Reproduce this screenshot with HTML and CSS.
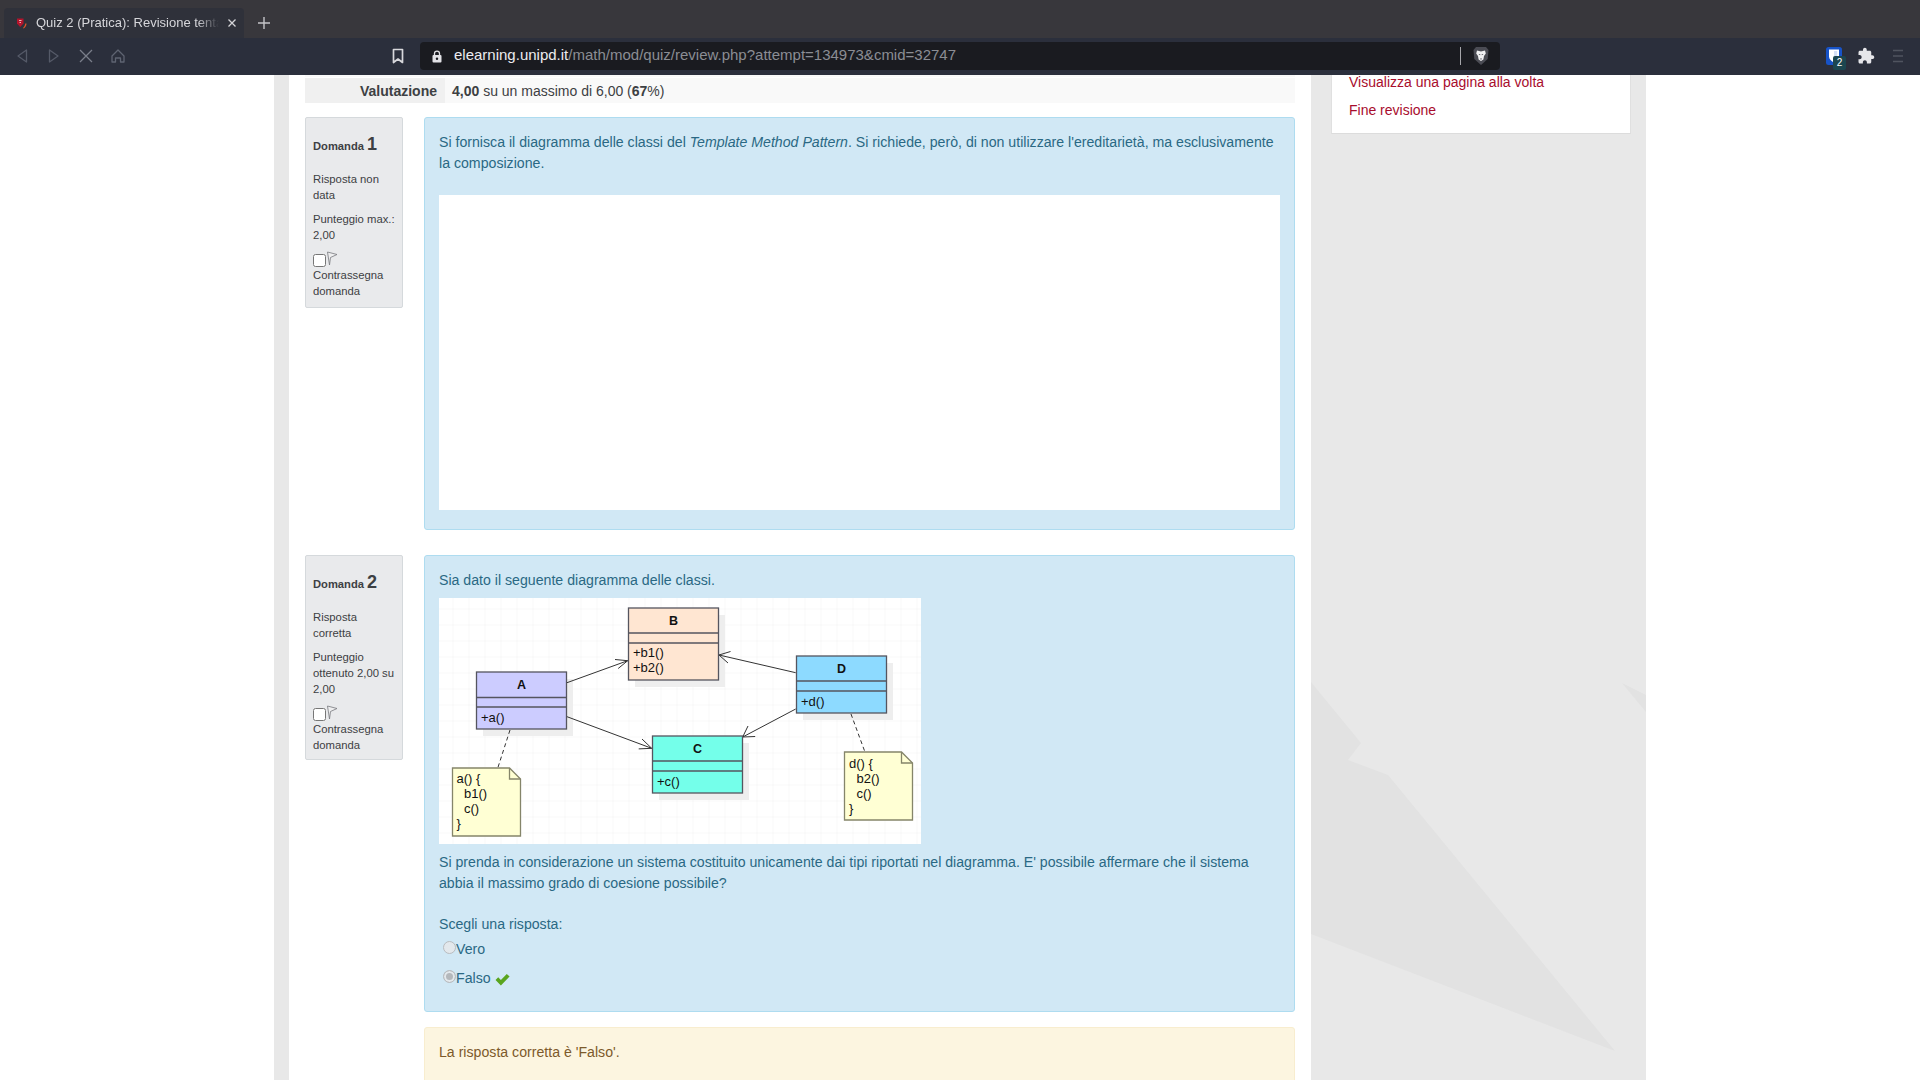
FILE: index.html
```html
<!DOCTYPE html>
<html lang="it">
<head>
    <meta charset="UTF-8">
    <meta name="viewport" content="width=device-width, initial-scale=1.0">
    <title>Quiz 2 (Pratica): Revisione tentativo</title>
    <link rel="stylesheet" href="styles.css">
</head>
<body>
    <!-- Browser tabs -->
    <div class="tabstrip">
        <div class="tab">
            <svg class="favicon" viewBox="0 0 12 12" width="12" height="12">
                <path d="M1 1.500h6.500v5L4.200 10 1 6.500z" fill="#b3142c"/>
                <path d="M3 3.500h2.500M3.500 5.500h1.500" stroke="#e9b9b9" stroke-width="1"/>
                <path d="M10.500 6.500c0 2-1 3.600-2.800 5l-.7-.5c1.300-1.300 2-2.600 2.300-4.500z" fill="#e2562a"/>
            </svg>
            <span class="tab-title">Quiz 2 (Pratica): Revisione tentativo</span>
            <svg class="tab-close" viewBox="0 0 10 10" width="10" height="10">
                <path d="M1.500 1.500l7 7M8.500 1.500l-7 7" stroke="#d4d4d8" stroke-width="1.300"/>
            </svg>
        </div>
        <svg class="tab-new" viewBox="0 0 14 14" width="14" height="14">
            <path d="M7 1v12M1 7h12" stroke="#c4c4c8" stroke-width="1.400"/>
        </svg>
    </div>

    <!-- Browser toolbar -->
    <div class="toolbar">
        <div class="toolbar-left">
            <span class="tool">
                <svg viewBox="0 0 14 16" width="14" height="16"><path d="M11.500 2 3 8l8.500 6z" fill="none" stroke="#555a68" stroke-width="1.300" stroke-linejoin="round"/></svg>
            </span>
            <span class="tool">
                <svg viewBox="0 0 14 16" width="14" height="16"><path d="M2.500 2 11 8l-8.500 6z" fill="none" stroke="#555a68" stroke-width="1.300" stroke-linejoin="round"/></svg>
            </span>
            <span class="tool">
                <svg viewBox="0 0 14 14" width="14" height="14"><path d="M1 1l12 12M13 1 1 13" stroke="#7a7e8a" stroke-width="1.300"/></svg>
            </span>
            <span class="tool">
                <svg viewBox="0 0 16 16" width="16" height="16"><path d="M2 8l6-6 6 6v6h-3.500v-4h-5v4H2z" fill="none" stroke="#5f6472" stroke-width="1.300" stroke-linejoin="round"/></svg>
            </span>
            <svg class="bookmark" viewBox="0 0 12 16" width="12" height="16">
                <path d="M1.500 1.500h9v13L6 11l-4.500 3.500z" fill="none" stroke="#d8d8dc" stroke-width="1.700" stroke-linejoin="round"/>
            </svg>
        </div>
        <div class="urlbar">
            <svg class="lock" viewBox="0 0 10 13" width="10" height="13">
                <path d="M2.500 5.500V3.600a2.500 2.500 0 0 1 5 0v1.900" fill="none" stroke="#e2e2e6" stroke-width="1.300"/>
                <rect x="0.500" y="5" width="9" height="7.500" rx="1" fill="#e2e2e6"/>
                <circle cx="5" cy="8.700" r="1.200" fill="#1a1b20"/>
            </svg>
            <span class="url"><span class="url-host">elearning.unipd.it</span>/math/mod/quiz/review.php?attempt=134973&amp;cmid=32747</span>
            <span class="url-sep"></span>
            <svg class="lion" viewBox="0 0 16 20" width="16" height="20">
                <path d="M3 1h10l2.500 3-.8 9L8 19l-6.700-6-.8-9z" fill="#4b4c54"/>
                <path d="M4 4.500 8 5.500l4-1 .8 3-1.800 2.500-.6 3.500L8 15l-2.400-1.500L5 10 3.200 7.500z" fill="#f1f1f3"/>
                <path d="M5.500 8h1.700v1.200zM10.500 8H8.800v1.200zM7 12.500h2L8 14z" fill="#4b4c54"/>
            </svg>
        </div>
        <div class="toolbar-right">
            <span class="tool bitwarden">
                <svg viewBox="0 0 16 18" width="16" height="18">
                    <rect width="16" height="18" rx="2.500" fill="#1753c8"/>
                    <path d="M3 2.500h10v7c0 2.800-2.500 4.800-5 6-2.500-1.200-5-3.200-5-6z" fill="#fff"/>
                    <path d="M8 4v9.500c1.800-1 3.200-2.400 3.200-4.300V4z" fill="#1753c8" opacity="0.180"/>
                </svg>
                <span class="badge">2</span>
            </span>
            <span class="tool">
                <svg viewBox="0 0 24 24" width="18" height="18"><path d="M20.500 11H19V7c0-1.100-.9-2-2-2h-4V3.500C13 2.120 11.880 1 10.500 1S8 2.120 8 3.500V5H4c-1.100 0-1.990.9-1.990 2v3.800H3.500c1.490 0 2.700 1.210 2.700 2.700s-1.210 2.700-2.700 2.700H2V20c0 1.100.9 2 2 2h3.800v-1.500c0-1.490 1.210-2.700 2.700-2.700 1.490 0 2.700 1.210 2.700 2.700V22H17c1.100 0 2-.9 2-2v-4h1.500c1.380 0 2.500-1.120 2.500-2.500S21.880 11 20.500 11z" fill="#e6e6ea"/></svg>
            </span>
            <span class="tool">
                <svg viewBox="0 0 12 14" width="12" height="14"><path d="M1 1.500h10M1 7h10M1 12.500h10" stroke="#50545f" stroke-width="1.600"/></svg>
            </span>
        </div>
    </div>

    <!-- Page -->
    <div class="viewport">
        <div class="page">
            <main class="main">
                <div class="summary-prev"></div>
                <div class="summary">
                    <div class="summary-label">Valutazione</div>
                    <div class="summary-value"><b>4,00</b> su un massimo di 6,00 (<b>67</b>%)</div>
                </div>

                <!-- Domanda 1 -->
                <section class="question first">
                    <div class="qinfo">
                        <h3>Domanda <span>1</span></h3>
                        <p>Risposta non data</p>
                        <p>Punteggio max.: 2,00</p>
                        <div class="qflag">
                            <input type="checkbox">
                            <svg viewBox="0 0 12 15" width="12" height="15"><path d="M1.500 1 11 3.500 4.500 6.500 3.500 14z" fill="#eeeeef" stroke="#77797d" stroke-width="0.800" stroke-linejoin="round"/></svg>
                        </div>
                        <p class="qflag-label">Contrassegna domanda</p>
                    </div>
                    <div class="qbody">
                        <p>Si fornisca il diagramma delle classi del <i>Template Method Pattern</i>. Si richiede, però, di non utilizzare l'ereditarietà, ma esclusivamente la composizione.</p>
                        <div class="answer-blank"></div>
                    </div>
                </section>

                <!-- Domanda 2 -->
                <section class="question">
                    <div class="qinfo">
                        <h3>Domanda <span>2</span></h3>
                        <p>Risposta corretta</p>
                        <p>Punteggio ottenuto 2,00 su 2,00</p>
                        <div class="qflag">
                            <input type="checkbox">
                            <svg viewBox="0 0 12 15" width="12" height="15"><path d="M1.500 1 11 3.500 4.500 6.500 3.500 14z" fill="#eeeeef" stroke="#77797d" stroke-width="0.800" stroke-linejoin="round"/></svg>
                        </div>
                        <p class="qflag-label">Contrassegna domanda</p>
                    </div>
                    <div class="qcolumn">
                        <div class="qbody second">
                            <p>Sia dato il seguente diagramma delle classi.</p>
                            <svg class="uml" viewBox="0 0 482 246" width="482" height="246">
                                <defs>
                                    <pattern id="grid" x="13.500" y="10.500" width="16" height="16" patternUnits="userSpaceOnUse">
                                        <path d="M0 16V0h16" fill="none" stroke="#f1f1f1" stroke-width="1"/>
                                    </pattern>
                                </defs>
                                <rect width="482" height="246" fill="#fff"/>
                                <rect width="482" height="246" fill="url(#grid)"/>

                                <!-- shadows -->
                                <g fill="#eeeeee">
                                    <rect x="44" y="81" width="90" height="57"/>
                                    <rect x="196" y="17" width="90" height="72"/>
                                    <rect x="220" y="145" width="90" height="57"/>
                                    <rect x="364" y="65" width="90" height="57"/>
                                </g>

                                <!-- links -->
                                <g fill="none" stroke="#333" stroke-width="1">
                                    <path d="M128 84.700 188.700 62.700M176 61.500l12.700 1.200-9.500 7.800"/>
                                    <path d="M128 118.700 212.700 150.300M203 141l9.700 9.300-13 .6"/>
                                    <path d="M356.700 74.700 280 57M291.500 53.500 280 57l9 8"/>
                                    <path d="M356.700 111 303.700 139M309 128l-5.300 11 12.500-.5"/>
                                    <path d="M71 132 59 169.300M412 116l13.700 37.300" stroke-dasharray="4 3"/>
                                </g>

                                <!-- classes -->
                                <g stroke="#55555f" stroke-width="1.300">
                                    <rect x="37.500" y="74" width="90" height="57" fill="#ccccff"/>
                                    <path d="M37.500 99.500h90M37.500 109h90"/>
                                    <rect x="189.500" y="10" width="90" height="72" fill="#ffe6d2"/>
                                    <path d="M189.500 35h90M189.500 45h90"/>
                                    <rect x="213.500" y="138" width="90" height="57" fill="#74ffea"/>
                                    <path d="M213.500 163h90M213.500 173h90"/>
                                    <rect x="357.500" y="58" width="90" height="57" fill="#8ddaff"/>
                                    <path d="M357.500 83h90M357.500 93h90"/>
                                </g>

                                <!-- notes -->
                                <g fill="#ffffd4" stroke="#85856a" stroke-width="1.300">
                                    <path d="M13.500 170h57l11 11v57h-68z"/>
                                    <path d="M70.500 170v11h11" fill="none"/>
                                    <path d="M405.500 154h57l11 11v57h-68z"/>
                                    <path d="M462.500 154v11h11" fill="none"/>
                                </g>

                                <g class="uml-name">
                                    <text x="82.500" y="91">A</text>
                                    <text x="234.500" y="26.500">B</text>
                                    <text x="258.500" y="154.500">C</text>
                                    <text x="402.500" y="74.500">D</text>
                                </g>
                                <g class="uml-text">
                                    <text x="42" y="123.500">+a()</text>
                                    <text x="194" y="59">+b1()</text>
                                    <text x="194" y="74">+b2()</text>
                                    <text x="218" y="187.500">+c()</text>
                                    <text x="362" y="107.500">+d()</text>
                                    <text x="17.500" y="185">a() {</text>
                                    <text x="25" y="200">b1()</text>
                                    <text x="25" y="215">c()</text>
                                    <text x="17.500" y="230">}</text>
                                    <text x="410" y="169.500">d() {</text>
                                    <text x="417.500" y="184.500">b2()</text>
                                    <text x="417.500" y="199.500">c()</text>
                                    <text x="410" y="214.500">}</text>
                                </g>
                            </svg>
                            <p class="qtext">Si prenda in considerazione un sistema costituito unicamente dai tipi riportati nel diagramma. E' possibile affermare che il sistema abbia il massimo grado di coesione possibile?</p>
                            <p class="prompt">Scegli una risposta:</p>
                            <label class="option"><input type="radio" disabled>Vero</label>
                            <label class="option checked">
                                <input type="radio" disabled checked>Falso
                                <svg class="tick" viewBox="0 0 14 12" width="15" height="13"><path d="M0.500 6.500 3 4l2.500 2.500L11 .8 13.600 3.300 5.500 11.500z" fill="#5aa51e"/></svg>
                            </label>
                        </div>
                        <div class="feedback">La risposta corretta è 'Falso'.</div>
                    </div>
                </section>
            </main>

            <aside class="side">
                <div class="side-block">
                    <a href="#">Visualizza una pagina alla volta</a>
                    <a href="#">Fine revisione</a>
                </div>
            </aside>

            <!-- Background watermark -->
            <svg class="watermark" viewBox="0 0 335 1005" width="335" height="1005">
                <path d="M0 607 50 668 37 685 77 700 304 976 0 859z" fill="#e2e2e2"/>
                <path d="M311 608 335 620V637z" fill="#e2e2e2"/>
            </svg>
        </div>
    </div>
</body>
</html>
```

FILE: styles.css
```css
/* General Page Styling */
html, body {
    height: 100%;
}

body {
    margin: 0;
    display: flex;
    flex-direction: column;
    height: 100vh;
    overflow: hidden;
    background-color: #fff;
    font-family: "Liberation Sans", Arial, sans-serif;
    font-size: 14.150px;
    line-height: 21px;
    color: #3d4043;
}

p {
    margin: 0;
}

/* Browser tabs */
.tabstrip {
    display: flex;
    align-items: flex-end;
    height: 38px;
    padding-left: 4px;
    background-color: #38373c;
    flex-shrink: 0;
}

.tab {
    display: flex;
    align-items: center;
    width: 240px;
    height: 30px;
    box-sizing: border-box;
    padding: 0 7px 0 12px;
    background-color: #2f313a;
    border-radius: 4px 4px 0 0;
}

.favicon {
    flex-shrink: 0;
}

.tab-title {
    flex: 1;
    margin-left: 8px;
    padding-bottom: 1px;
    overflow: hidden;
    white-space: nowrap;
    font-size: 13px;
    line-height: 18px;
    color: #d6d6da;
    -webkit-mask-image: linear-gradient(to right, #000 88%, transparent 100%);
    mask-image: linear-gradient(to right, #000 88%, transparent 100%);
}

.tab-close {
    flex-shrink: 0;
    margin-left: 8px;
}

.tab-new {
    margin: 0 0 8px 13px;
}

/* Browser toolbar */
.toolbar {
    display: grid;
    grid-template-columns: 1fr 1080px 1fr;
    align-items: center;
    height: 37px;
    box-sizing: border-box;
    padding: 0 6px 1px;
    background-color: #2b2f3c;
    flex-shrink: 0;
}

.toolbar-left,
.toolbar-right {
    display: flex;
    align-items: center;
}

.toolbar-right {
    justify-content: flex-end;
}

.tool {
    display: flex;
    justify-content: center;
    align-items: center;
    width: 32px;
    height: 28px;
    position: relative;
}

.bookmark {
    margin-left: auto;
    margin-right: 16px;
}

.urlbar {
    display: flex;
    align-items: center;
    height: 28px;
    padding: 0 11px 0 12px;
    background-color: #1a1b20;
    border-radius: 4px;
}

.lock {
    flex-shrink: 0;
    margin-right: 12px;
}

.url {
    flex: 1;
    padding-bottom: 2px;
    font-size: 15px;
    line-height: 18px;
    color: #8b8d94;
    white-space: nowrap;
}

.url-host {
    color: #ececef;
}

.url-sep {
    width: 1px;
    height: 18px;
    margin-right: 12px;
    background-color: #a6a6aa;
}

.badge {
    position: absolute;
    left: 15px;
    top: 14px;
    width: 13px;
    height: 14px;
    border-radius: 2px;
    background-color: #1c4650;
    color: #fff;
    font-size: 10px;
    line-height: 14px;
    text-align: center;
}

/* Page columns */
.viewport {
    flex: 1;
    overflow: hidden;
}

.page {
    display: flex;
    position: relative;
    width: 1372px;
    height: 1005px;
    margin-left: 274px;
    box-sizing: border-box;
    padding-left: 15px;
    background-color: #e8e8e8;
}

.main {
    width: 1022px;
    height: 1100px;
    box-sizing: border-box;
    padding: 0 16px;
    background-color: #fff;
    flex-shrink: 0;
}

.side {
    flex: 1;
    padding: 0 15px 0 20px;
}

.side-block {
    display: flex;
    flex-direction: column;
    gap: 7px;
    position: relative;
    z-index: 1;
    height: 61px;
    margin-top: -3px;
    background-color: #fff;
    border-bottom: 1px solid #dcdcdc;
    border-right: 1px solid #e0e0e0;
    border-left: 1px solid #e0e0e0;
    padding-left: 17px;
    font-size: 14px;
}

.side-block a {
    color: #a80d2d;
    text-decoration: none;
}

.watermark {
    position: absolute;
    left: 1037px;
    top: 0;
}

/* Valutazione row */
.summary-prev {
    height: 2px;
    margin-bottom: 1px;
    background-color: #f9f9f9;
}

.summary {
    display: flex;
    height: 25px;
    line-height: 27px;
    font-size: 14px;
    background-color: #f9f9f9;
}

.summary-label {
    width: 140px;
    box-sizing: border-box;
    padding-right: 8px;
    background-color: #f0f0f0;
    font-weight: bold;
    text-align: right;
}

.summary-value {
    padding-left: 7px;
}

/* Questions */
.question {
    display: flex;
    gap: 21px;
    margin-top: 25px;
}

.question.first {
    margin-top: 14px;
}

.qinfo {
    align-self: flex-start;
    width: 98px;
    box-sizing: border-box;
    padding: 14px 7px 8px;
    background-color: #e9eaec;
    border: 1px solid #d5d9dc;
    border-radius: 2px;
    font-size: 11.300px;
    line-height: 16px;
}

.question:not(.first) .qinfo {
    padding-bottom: 6px;
}

.qinfo h3 {
    margin: 0 0 13px;
    font-size: 11.200px;
    line-height: 24px;
    font-weight: bold;
}

.qinfo h3 span {
    font-size: 18px;
}

.qinfo p + p {
    margin-top: 8px;
}

.qflag {
    display: flex;
    align-items: flex-end;
    height: 16px;
    margin-top: 8px;
}

.qflag input {
    width: 13px;
    height: 13px;
    margin: 0;
}

.qflag svg {
    margin-bottom: 1px;
}

.qcolumn {
    flex: 1;
}

.qbody {
    flex: 1;
    box-sizing: border-box;
    padding: 14px 14px 19px;
    background-color: #d1e8f5;
    border: 1px solid #aedcf0;
    border-radius: 3px;
    color: #2a6884;
}

.answer-blank {
    height: 315px;
    margin-top: 21px;
    background-color: #fff;
}

.qbody.second {
    padding-bottom: 22px;
}

.uml {
    display: block;
    margin-top: 7px;
}

.uml-name text {
    font-size: 12.500px;
    font-weight: bold;
    fill: #111;
    text-anchor: middle;
}

.uml-text text {
    font-size: 13px;
    fill: #111;
}

.qtext {
    margin-top: 8px;
}

.prompt {
    margin-top: 20px;
}

.option {
    display: block;
    margin-top: 4px;
    padding-left: 4px;
}

.option + .option {
    margin-top: 8px;
}

.option input {
    appearance: none;
    -webkit-appearance: none;
    box-sizing: border-box;
    width: 13px;
    height: 13px;
    margin: 0;
    border: 1px solid #b9bcbf;
    border-radius: 50%;
    background-color: #e3e8ec;
    vertical-align: 0;
}

.option input:checked {
    background-color: #b4b8bc;
    box-shadow: inset 0 0 0 2px #e3e8ec;
}

.tick {
    margin-left: 0;
    vertical-align: -3px;
}

.feedback {
    margin-top: 15px;
    height: 80px;
    padding: 14px;
    background-color: #fcf5e0;
    border: 1px solid #f8edcf;
    border-radius: 3px;
    color: #7d5a2b;
}
```
